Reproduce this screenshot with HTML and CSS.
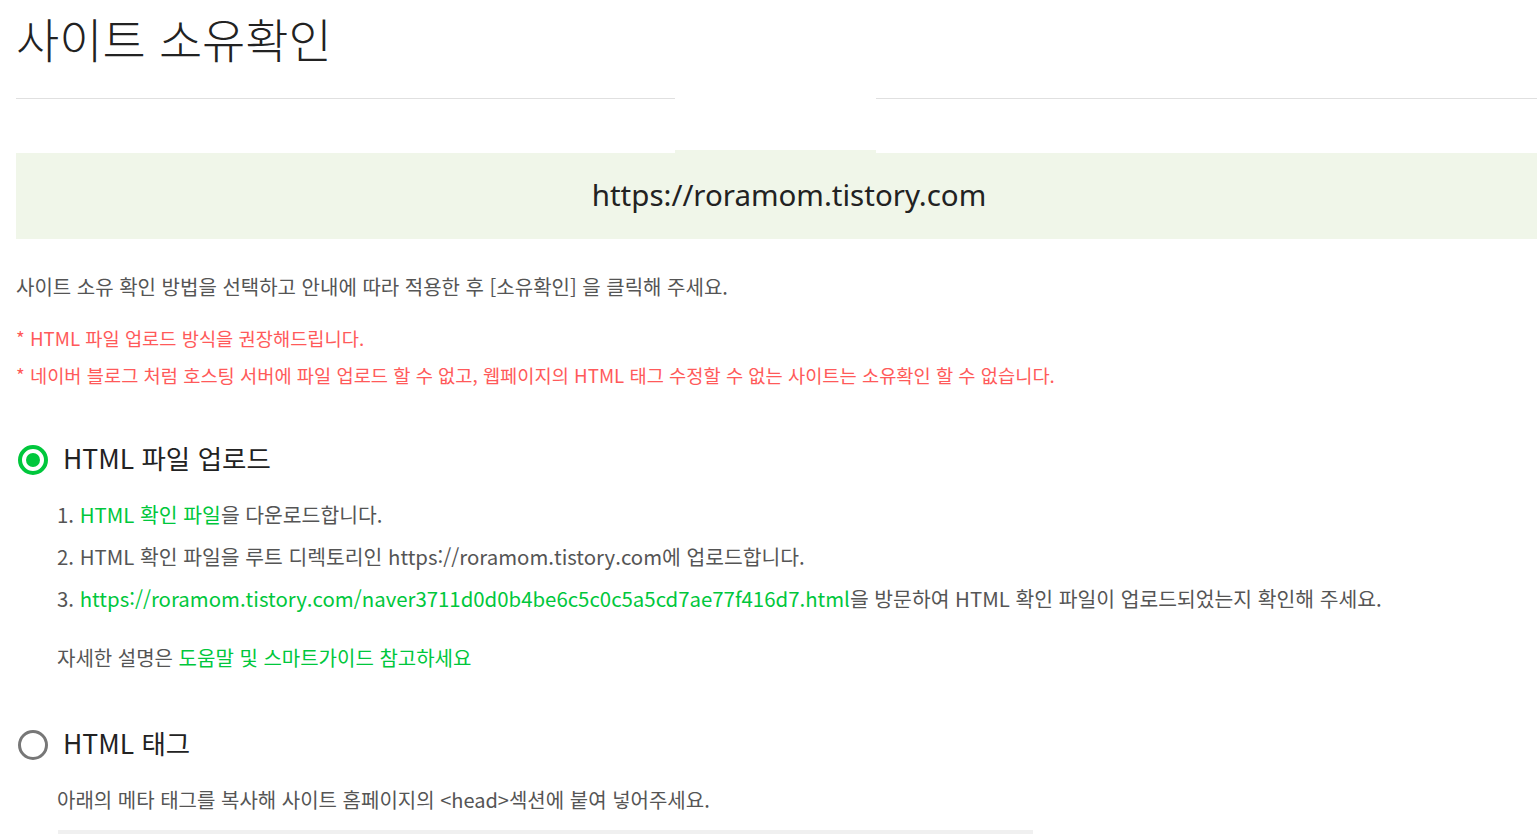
FILE: index.html
```html
<!DOCTYPE html>
<html lang="ko">
<head>
  <meta charset="UTF-8">
  <meta name="viewport" content="width=device-width, initial-scale=1.0">
  <title>사이트 소유확인</title>
  <link rel="stylesheet" href="styles.css">
</head>
<body>
<div class="page">
  <h1 class="title">사이트 소유확인</h1>
  <div class="divider">
    <span class="divider-line divider-left"></span>
    <span class="divider-line divider-right"></span>
  </div>

  <div class="url-box">https://roramom.tistory.com</div>

  <p class="guide">사이트 소유 확인 방법을 선택하고 안내에 따라 적용한 후 [소유확인] 을 클릭해 주세요.</p>

  <ul class="notice">
    <li>* HTML 파일 업로드 방식을 권장해드립니다.</li>
    <li>* 네이버 블로그 처럼 호스팅 서버에 파일 업로드 할 수 없고, 웹페이지의 HTML 태그 수정할 수 없는 사이트는 소유확인 할 수 없습니다.</li>
  </ul>

  <div class="option">
    <label class="option-head">
      <span class="radio checked"></span>
      <span class="option-title">HTML 파일 업로드</span>
    </label>
    <ol class="steps">
      <li>1. <a class="link" href="#">HTML 확인 파일</a>을 다운로드합니다.</li>
      <li>2. HTML 확인 파일을 루트 디렉토리인 https://roramom.tistory.com에 업로드합니다.</li>
      <li>3. <a class="link" href="#">https://roramom.tistory.com/naver3711d0d0b4be6c5c0c5a5cd7ae77f416d7.html</a>을 방문하여 HTML 확인 파일이 업로드되었는지 확인해 주세요.</li>
    </ol>
    <p class="detail">자세한 설명은 <a class="link" href="#">도움말 및 스마트가이드 참고하세요</a></p>
  </div>

  <div class="option option-tag">
    <label class="option-head">
      <span class="radio"></span>
      <span class="option-title">HTML 태그</span>
    </label>
    <p class="option-desc">아래의 메타 태그를 복사해 사이트 홈페이지의 &lt;head&gt;섹션에 붙여 넣어주세요.</p>
    <div class="code-box"></div>
  </div>
</div>
</body>
</html>
```

FILE: styles.css
```css
* {
  box-sizing: border-box;
  margin: 0;
  padding: 0;
}

html, body {
  overflow: hidden;
}

body {
  background-color: #fff;
  font-family: "Noto Sans CJK KR", "Noto Sans", sans-serif;
  color: #555;
}

.page {
  width: 1562px;
  padding-left: 16px;
}

.title {
  margin-top: 10px;
  font-size: 47px;
  line-height: 56px;
  font-weight: 300;
  color: #222;
}

.divider {
  display: flex;
  gap: 201px;
  margin-top: 32px;
}

.divider-line {
  height: 1px;
  background-color: #e0e0e0;
}

.divider-left {
  width: 659px;
}

.divider-right {
  flex: 1;
}

.url-box {
  position: relative;
  margin-top: 54px;
  height: 86px;
  display: flex;
  justify-content: center;
  align-items: center;
  padding-bottom: 3px;
  background-color: #f0f6e9;
  font-family: "Noto Sans", sans-serif;
  font-size: 29.5px;
  color: #222;
}

.url-box::before {
  content: "";
  position: absolute;
  left: 659px;
  top: -3px;
  width: 201px;
  height: 3px;
  background-color: #f0f6e9;
}

.guide {
  margin-top: 34px;
  font-size: 20px;
  line-height: 28px;
  color: #555;
}

.notice {
  list-style: none;
  margin-top: 18px;
  font-size: 18.7px;
  line-height: 37px;
  color: #ff5a5a;
}

.option {
  margin-top: 47px;
}

.option-head {
  display: flex;
  align-items: center;
  gap: 15px;
  height: 40px;
  padding-left: 2px;
}

.radio {
  width: 30px;
  height: 30px;
  border: 3px solid #777;
  border-radius: 50%;
  display: flex;
  justify-content: center;
  align-items: center;
}

.radio.checked {
  border: 4px solid #00c73c;
}

.radio.checked::after {
  content: "";
  width: 14px;
  height: 14px;
  border-radius: 50%;
  background-color: #00c73c;
}

.option-title {
  padding-bottom: 6px;
  font-size: 26.5px;
  color: #222;
}

.steps {
  list-style: none;
  margin-top: 13px;
  padding-left: 41px;
  font-size: 20.4px;
  line-height: 42px;
  color: #555;
}

.link {
  color: #00c73c;
  text-decoration: none;
}

.detail {
  margin-top: 25px;
  padding-left: 41px;
  font-size: 20px;
  line-height: 28px;
  color: #555;
}

.option-tag {
  margin-top: 53px;
}

.option-desc {
  margin-top: 21px;
  padding-left: 41px;
  font-size: 20px;
  line-height: 28px;
  color: #555;
}

.code-box {
  margin: 16px 0 0 42px;
  width: 975px;
  height: 60px;
  background-color: #f0f0f0;
}
```
